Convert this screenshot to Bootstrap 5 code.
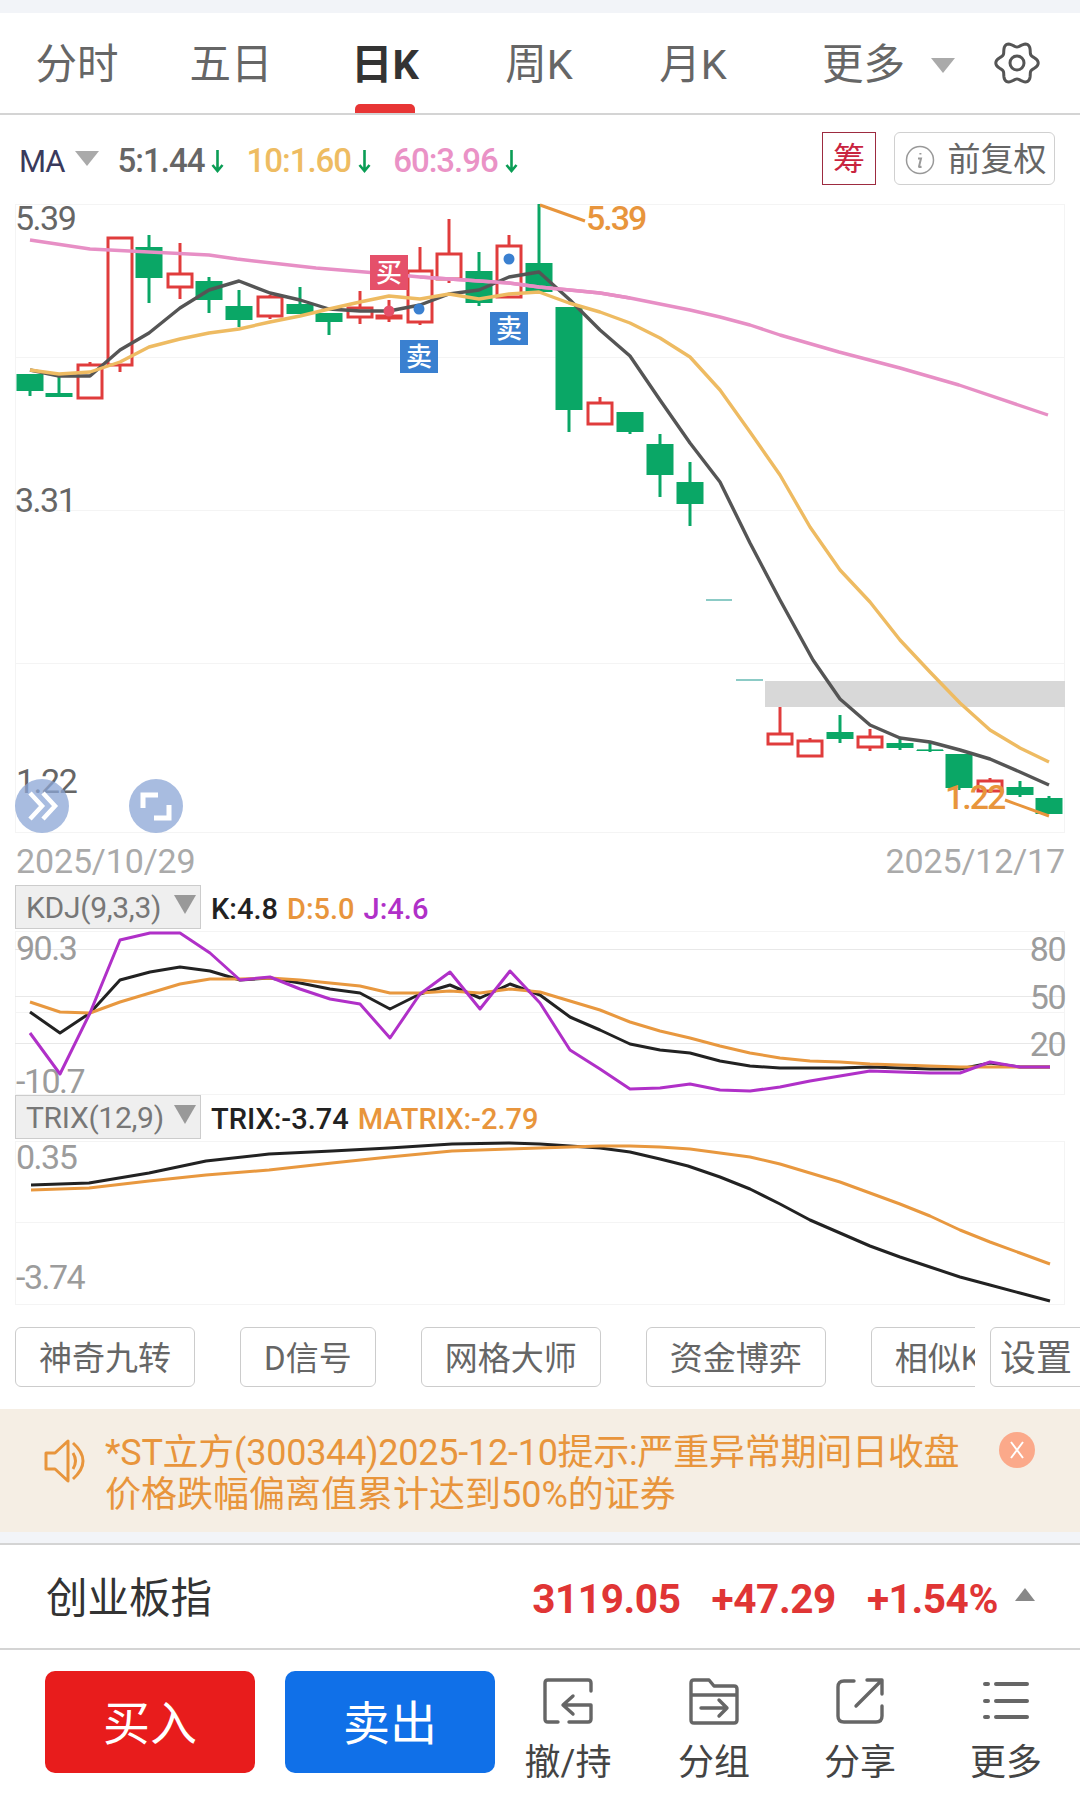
<!DOCTYPE html>
<html lang="zh-CN">
<head>
    <meta charset="UTF-8">
    <meta name="viewport" content="width=device-width, initial-scale=1.0">
    <title>创业板指 日K</title>
    <link rel="stylesheet" href="https://cdn.jsdelivr.net/npm/bootstrap@5.3.0/dist/css/bootstrap.min.css">
    <style>
        html, body { background: #fff; }
        body { width: 1080px; height: 1794px; overflow: hidden; font-family: Roboto, "Noto Sans CJK SC", sans-serif; color: #333; }
        svg { display: block; overflow: visible; }

        .top-strip { height: 13px; background: #f2f4f8; }

        .tab-bar { height: 102px; border-bottom: 2px solid #d4d4d4; }
        .tab-item { width: 154px; height: 100px; font-size: 41.5px; line-height: 104px; color: #666; text-align: center; position: relative; }
        .tab-item.active { color: #333; font-weight: 700; }
        .tab-item.active::after { content: ""; position: absolute; left: 47px; bottom: 0; width: 60px; height: 9px; border-radius: 5px 5px 0 0; background: #e83535; }
        .tab-more { width: 133px; margin-left: 52px; padding-top: 4px; }
        .tri-down { width: 0; height: 0; border-left: 12px solid transparent; border-right: 12px solid transparent; border-top: 15px solid #aaa; }
        .tab-gear { margin-left: 40px; }

        .ma-row { height: 75px; padding: 17px 25px 0 19px; }
        .ma-name { font-size: 31px; color: #3a3a5c; margin-right: 10px; letter-spacing: -1px; padding-top: 7px; }
        .ma-item { font-size: 33px; font-weight: 500; letter-spacing: -1px; margin-right: 22px; padding-top: 4px; }
        .ma-item svg { margin-left: 7px; }
        .c-ma5 { color: #666; }
        .c-ma10 { color: #eebc62; }
        .c-ma60 { color: #ea92c6; }
        .ma-tri { margin-right: 19px; }
        .chip-chou { width: 54px; height: 53px; border: 1px solid #9d2b40; color: #c9243f; font-size: 32px; }
        .chip-fq { width: 161px; height: 53px; margin-left: 18px; padding-top: 2px; padding-left: 2px; border: 1px solid #d0d0d0; border-radius: 6px; color: #666; font-size: 33px; gap: 13px; }

        .ax { font-size: 34px; letter-spacing: -1.5px; fill: #666; }
        .ax-light { fill: #9c9c9c; }
        .ax-hi { fill: #e8953c; font-weight: 500; letter-spacing: -2px; }
        .sig { font-size: 26px; fill: #fff; font-weight: 500; text-anchor: middle; }

        .date-row { height: 51px; padding: 12px 15px 0 16px; color: #aaa; font-size: 34px; line-height: 30px; letter-spacing: -.15px; }

        .ind-row { height: 45px; }
        .ind-box { width: 186px; height: 44px; margin-left: 15px; padding: 0 4px 0 10px; background: #efefef; border: 1px solid #ccc; color: #777; font-size: 30px; letter-spacing: -.3px; }
        .ind-tri { border-left-width: 11px; border-right-width: 11px; border-top: 19px solid #999; margin-top: -6px; }
        .ind-vals { margin-left: 10px; font-size: 29px; font-weight: 500; gap: 9px; }
        .c-k { color: #222; }
        .c-d { color: #e8953c; }
        .c-j { color: #b030c8; }

        .tool-row { height: 104px; padding-top: 22px; position: relative; }
        .tool-scroll { width: 975px; overflow: hidden; padding-left: 15px; gap: 45px; }
        .tool-btn { flex: none; height: 60px; padding: 0 23px; border: 1px solid #ccc; border-radius: 6px; background: #fff; color: #666; font-size: 33px; line-height: 62px; }
        .tool-set { position: absolute; left: 990px; top: 22px; width: 100px; height: 60px; padding-left: 9px; border: 1px solid #ccc; border-radius: 6px; color: #666; font-size: 36px; line-height: 62px; }

        .notice { height: 123px; background: #f5eee4; padding: 23px 0 0 44px; color: #e8953c; font-size: 36px; line-height: 42px; }
        .notice-first { letter-spacing: -.25px; white-space: nowrap; }
        .notice-text { width: 862px; margin-left: 17px; flex: none; }
        .notice-close { width: 36px; height: 36px; margin-left: 32px; border-radius: 50%; background: #fba98a; flex: none; }
        .gap-strip { height: 11px; background: #f2f4f8; border-bottom: 2px solid #d4d4d4; box-sizing: content-box; }

        .quote-row { height: 105px; padding: 6px 45px 0 46px; border-bottom: 2px solid #d4d4d4; }
        .quote-name { font-size: 41.5px; color: #333; }
        .quote-vals { font-size: 40.5px; font-weight: 700; color: #e03535; letter-spacing: -.4px; gap: 31px; }
        .tri-up { width: 0; height: 0; margin: -10px 0 0 -14px; border-left: 10px solid transparent; border-right: 10px solid transparent; border-bottom: 13px solid #888; }

        .act-bar { height: 144px; padding: 21px 0 0 45px; }
        .act-trade { flex: none; width: 210px; height: 102px; margin-right: 30px; padding-top: 4px; border: 0; border-radius: 10px; color: #fff; font-size: 47px; line-height: 1; }
        .act-buy { background: #e81c1c; }
        .act-sell { background: #1070e8; }
        .act-item { flex: none; width: 146px; color: #444; font-size: 36px; line-height: 40px; text-align: center; }
        .act-item svg { margin: 7px auto 19px; }
        .act-first { margin-left: -30px; }
    </style>
</head>
<body>
    <div class="top-strip"></div>

    <!-- period tabs -->
    <div class="tab-bar d-flex align-items-center">
        <div class="tab-item">分时</div>
        <div class="tab-item">五日</div>
        <div class="tab-item active">日K</div>
        <div class="tab-item">周K</div>
        <div class="tab-item">月K</div>
        <div class="tab-item tab-more d-flex align-items-center justify-content-between">
            <span>更多</span><span class="tri-down"></span>
        </div>
        <div class="tab-gear">
            <svg width="44" height="44" viewBox="-22 -22 44 44" fill="none" stroke="#555" stroke-width="3"><path id="gearPath"/><circle r="7"/></svg>
        </div>
    </div>

    <!-- MA legend -->
    <div class="ma-row d-flex align-items-start">
        <div class="d-flex align-items-center" style="height:53px">
            <span class="ma-name">MA</span><span class="tri-down ma-tri"></span>
            <span class="ma-item c-ma5 d-flex align-items-center">5:1.44<svg width="13" height="24" viewBox="0 0 13 24" fill="none" stroke="#0a9d55" stroke-width="2.6"><path d="M6.5 1v21M1.5 16l5 6 5-6"/></svg></span>
            <span class="ma-item c-ma10 d-flex align-items-center">10:1.60<svg width="13" height="24" viewBox="0 0 13 24" fill="none" stroke="#0a9d55" stroke-width="2.6"><path d="M6.5 1v21M1.5 16l5 6 5-6"/></svg></span>
            <span class="ma-item c-ma60 d-flex align-items-center">60:3.96<svg width="13" height="24" viewBox="0 0 13 24" fill="none" stroke="#0a9d55" stroke-width="2.6"><path d="M6.5 1v21M1.5 16l5 6 5-6"/></svg></span>
        </div>
        <div class="ms-auto d-flex">
            <div class="chip-chou d-flex align-items-center justify-content-center">筹</div>
            <div class="chip-fq d-flex align-items-center justify-content-center">
                <svg width="30" height="30" viewBox="0 0 30 30" fill="none" stroke="#999" stroke-width="1.5"><circle cx="15" cy="15" r="13.5"/><path d="M13 13.5h3l-2 8q0 1.2 2.5 0M15.4 8v1.4" stroke-width="2"/></svg>
                <span>前复权</span>
            </div>
        </div>
    </div>

    <!-- main K line chart, svg coords are page coords -->
    <svg id="kChart" width="1080" height="644" viewBox="0 190 1080 644"></svg>

    <div class="date-row d-flex justify-content-between"><span>2025/10/29</span><span>2025/12/17</span></div>

    <div class="ind-row d-flex align-items-start">
        <div class="ind-box d-flex align-items-center justify-content-between"><span>KDJ(9,3,3)</span><span class="tri-down ind-tri"></span></div>
        <div class="ind-vals d-flex align-items-center" style="height:50px">
            <span class="c-k">K:4.8</span><span class="c-d">D:5.0</span><span class="c-j">J:4.6</span>
        </div>
    </div>
    <svg id="kdjChart" width="1080" height="165" viewBox="0 930 1080 165"></svg>

    <div class="ind-row d-flex align-items-start">
        <div class="ind-box d-flex align-items-center justify-content-between"><span>TRIX(12,9)</span><span class="tri-down ind-tri"></span></div>
        <div class="ind-vals d-flex align-items-center" style="height:50px">
            <span class="c-k">TRIX:-3.74</span><span class="c-d">MATRIX:-2.79</span>
        </div>
    </div>
    <svg id="trixChart" width="1080" height="165" viewBox="0 1140 1080 165"></svg>

    <!-- tool buttons -->
    <div class="tool-row">
        <div class="tool-scroll d-flex">
            <div class="tool-btn">神奇九转</div>
            <div class="tool-btn">D信号</div>
            <div class="tool-btn">网格大师</div>
            <div class="tool-btn">资金博弈</div>
            <div class="tool-btn">相似K线</div>
        </div>
        <div class="tool-set">设置</div>
    </div>

    <div class="notice d-flex align-items-start">
        <svg width="44" height="44" viewBox="0 0 44 44" fill="none" stroke="#e8953c" stroke-width="3" stroke-linejoin="round" style="margin-top:7px;flex:none"><path d="M2 14h9L24 2v40L11 30H2z"/><path d="M29 14q5 8 0 16M29 4q20 18 0 36"/></svg>
        <div class="notice-text">
            <div class="notice-first">*ST立方(300344)2025-12-10提示:严重异常期间日收盘</div>
            <div>价格跌幅偏离值累计达到50%的证券</div>
        </div>
        <div class="notice-close d-flex align-items-center justify-content-center"><svg width="18" height="22" viewBox="0 0 18 22" stroke="#fff" stroke-width="2"><path d="M3 3l12 16M15 3L3 19"/></svg></div>
    </div>
    <div class="gap-strip"></div>

    <div class="quote-row d-flex align-items-center justify-content-between">
        <div class="quote-name">创业板指</div>
        <div class="quote-vals d-flex align-items-center"><span>3119.05</span><span>+47.29</span><span>+1.54%</span><span class="tri-up"></span></div>
    </div>

    <!-- bottom actions -->
    <div class="act-bar d-flex align-items-start">
        <button class="act-trade act-buy">买入</button>
        <button class="act-trade act-sell">卖出</button>
        <div class="act-item act-first">
            <svg width="50" height="46" viewBox="0 0 50 46" fill="none" stroke="#666" stroke-width="3.4" stroke-linecap="round" stroke-linejoin="round"><path d="M15 44H5q-3 0-3-3V5q0-3 3-3h40q3 0 3 3v8M26 44h19q3 0 3-3V27H21M30 18l-10 9 10 9"/></svg>
            撤/持
        </div>
        <div class="act-item">
            <svg width="50" height="46" viewBox="0 0 50 46" fill="none" stroke="#666" stroke-width="3.4" stroke-linecap="round" stroke-linejoin="round"><path d="M2 17V5q0-3 3-3h15l5 6h20q3 0 3 3v31q0 3-3 3H5q-3 0-3-3zh46M12 30h26M30 22l8 8-8 8"/></svg>
            分组
        </div>
        <div class="act-item">
            <svg width="48" height="46" viewBox="0 0 48 46" fill="none" stroke="#666" stroke-width="3.4" stroke-linecap="round" stroke-linejoin="round"><path d="M18 3H8Q2 3 2 9v29q0 6 6 6h32q6 0 6-6V28M20 28L45 3M31 2h15v14"/></svg>
            分享
        </div>
        <div class="act-item">
            <svg width="46" height="46" viewBox="0 0 46 46" fill="none" stroke="#666" stroke-width="4" stroke-linecap="round"><path d="M13 6h31M13 23h31M13 39h31M2 6h3M2 23h3M2 39h3"/></svg>
            更多
        </div>
    </div>

    <script>
        const NS = "http://www.w3.org/2000/svg";
        const RED = "#e03c3c", GREEN = "#0aa766";

        function el(svg, name, attrs, text) {
            const node = document.createElementNS(NS, name);
            for (const k in attrs) node.setAttribute(k, attrs[k]);
            if (text) node.textContent = text;
            svg.appendChild(node);
            return node;
        }
        function line(svg, x1, y1, x2, y2, color, w) {
            el(svg, "line", { x1, y1, x2, y2, stroke: color, "stroke-width": w });
        }
        function poly(svg, pts, color, w) {
            el(svg, "polyline", { points: pts.join(" "), fill: "none", stroke: color, "stroke-width": w, "stroke-linejoin": "round" });
        }
        function label(svg, x, y, text, cls, anchor) {
            el(svg, "text", { x, y, class: cls, "text-anchor": anchor || "start" }, text);
        }
        // frame with horizontal lines
        function frame(svg, top, bottom, rows, color) {
            el(svg, "rect", { x: 15.5, y: top + .5, width: 1049, height: bottom - top, fill: "none", stroke: "#f4f4f4" });
            rows.forEach(y => line(svg, 15, y + .5, 1065, y + .5, color || "#f4f4f4", 1));
        }

        // gear outline
        let gear = "";
        for (let a = 0; a <= 120; a++) {
            const t = a / 120 * Math.PI * 2, r = 18.6 + 2.6 * Math.cos(6 * t);
            gear += (a ? "L" : "M") + (r * Math.cos(t)).toFixed(2) + " " + (r * Math.sin(t)).toFixed(2);
        }
        document.getElementById("gearPath").setAttribute("d", gear + "Z");

        // [x, color, bodyTop, bodyBottom, wickTop, wickBottom]
        const candles = [
            [30, "g", 374, 391, 374, 396], [59, "g", 393, 397, 377, 397], [90, "r", 364, 399, 362, 399],
            [120, "r", 237, 366, 237, 372], [149, "g", 247, 278, 235, 303], [180, "r", 273, 288, 243, 299],
            [209, "g", 281, 300, 277, 313], [239, "g", 306, 320, 290, 327], [270, "r", 296, 317, 295, 319],
            [300, "g", 304, 314, 287, 314], [329, "g", 313, 322, 313, 335], [360, "r", 307, 318, 291, 324],
            [389, "r", 315, 317, 300, 322], [420, "r", 270, 323, 247, 325], [449, "r", 253, 280, 219, 283],
            [479, "g", 271, 303, 252, 306], [509, "r", 245, 298, 235, 298], [539, "g", 263, 292, 204, 292],
            [569, "g", 307, 410, 307, 432], [600, "r", 402, 425, 397, 425], [630, "g", 412, 432, 412, 434],
            [660, "g", 444, 475, 434, 497], [690, "g", 482, 504, 462, 526],
            [780, "r", 733, 745, 707, 745], [810, "r", 740, 757, 738, 757], [840, "g", 732, 739, 715, 743],
            [870, "r", 736, 748, 729, 751], [900, "g", 743, 748, 737, 750], [930, "g", 750, 751, 742, 752],
            [959, "g", 754, 788, 754, 790], [990, "r", 780, 792, 778, 793], [1020, "g", 787, 795, 781, 797],
            [1049, "g", 798, 814, 796, 814]
        ];
        const ma5 = [30,370, 59,376, 90,376, 120,350, 149,333, 180,308, 209,290, 239,281, 270,293, 300,300, 329,309, 360,311, 389,311, 420,305, 449,294, 479,290, 509,277, 539,272, 570,300, 600,330, 630,356, 660,400, 690,443, 720,482, 750,543, 780,600, 813,660, 840,699, 870,725, 900,738, 930,742, 960,750, 990,759, 1020,772, 1049,785];
        const ma10 = [30,370, 59,374, 90,372, 120,362, 149,347, 180,339, 209,333, 239,329, 270,322, 300,316, 329,309, 360,302, 389,296, 420,299, 449,294, 479,299, 509,294, 539,292, 569,303, 600,312, 630,323, 660,338, 690,357, 720,390, 750,432, 780,475, 810,527, 840,570, 870,602, 900,640, 930,672, 960,703, 990,730, 1020,748, 1049,762];
        const ma60 = [30,240, 90,249, 149,252, 209,255, 237,259, 316,268, 389,274, 420,277, 509,283, 539,287, 600,293, 630,298, 690,310, 720,317, 750,325, 780,335, 839,352, 900,368, 959,385, 1048,415];

        const k = document.getElementById("kChart");
        frame(k, 204, 832, [357, 510, 663]);
        el(k, "rect", { x: 765, y: 681, width: 300, height: 26, fill: "#d8d8d8" });
        candles.forEach(([x, c, t, b, wt, wb]) => {
            const col = c === "r" ? RED : GREEN;
            if (c === "r") {
                line(k, x, wt, x, t, col, 3);
                line(k, x, b, x, wb, col, 3);
                el(k, "rect", { x: x - 12, y: t + 1, width: 24, height: b - t - 2 > 2 ? b - t - 2 : 2, fill: "#fff", stroke: col, "stroke-width": 3 });
            } else {
                line(k, x, wt, x, wb, col, 3);
                el(k, "rect", { x: x - 13.5, y: t, width: 27, height: b - t, fill: col });
            }
        });
        line(k, 706, 600, 732, 600, "#3fa8a0", 1.2);
        line(k, 736, 680, 763, 680, "#3fa8a0", 1.2);
        line(k, 917, 750, 943, 750, GREEN, 1.2);
        poly(k, ma60, "#e78fc5", 3.4);
        poly(k, ma5, "#555", 3.4);
        poly(k, ma10, "#eebb62", 3.4);
        // redraw pink over the crossing part, as it lies on top there
        poly(k, ma60.slice(14, 24), "#e78fc5", 3.4);

        el(k, "circle", { cx: 389, cy: 311, r: 5.5, fill: "#e5506a" });
        el(k, "circle", { cx: 419, cy: 309, r: 5.5, fill: "#3a80d0" });
        el(k, "circle", { cx: 509, cy: 259, r: 5.5, fill: "#3a80d0" });
        [[370, 255, 38, 35, "#e5506a", "买"], [400, 340, 38, 33, "#3a80d0", "卖"], [490, 312, 38, 33, "#3a80d0", "卖"]].forEach(([x, y, w, h, col, t]) => {
            el(k, "rect", { x, y, width: w, height: h, fill: col });
            label(k, x + w / 2, y + h / 2 + 9.5, t, "sig", "middle");
        });

        line(k, 540, 205, 585, 221, "#e8953c", 3);
        line(k, 1005, 800, 1049, 816, "#e8953c", 3);
        label(k, 15, 230, "5.39", "ax");
        label(k, 15, 512, "3.31", "ax");
        label(k, 16, 793, "1.22", "ax");
        label(k, 586, 230, "5.39", "ax ax-hi");
        label(k, 945, 809, "1.22", "ax ax-hi");

        el(k, "circle", { cx: 42, cy: 806, r: 27, fill: "#8ba6d6", "fill-opacity": .75 });
        el(k, "circle", { cx: 156, cy: 806, r: 27, fill: "#8ba6d6", "fill-opacity": .75 });
        el(k, "path", { d: "M30 793l12 13-12 13M43 793l12 13-12 13", fill: "none", stroke: "#fff", "stroke-width": 4.5 });
        el(k, "path", { d: "M158 795h-15v13M154 818h15v-13", fill: "none", stroke: "#fff", "stroke-width": 5 });

        const kLine = [30,1012, 60,1033, 90,1013, 120,980, 150,972, 180,967, 210,971, 240,980, 270,978, 300,983, 330,989, 360,993, 390,1009, 420,994, 450,985, 480,998, 510,984, 540,995, 570,1017, 600,1030, 630,1044, 660,1050, 690,1053, 720,1061, 750,1066, 780,1068, 810,1068, 840,1068, 870,1067, 900,1068, 930,1069, 960,1069, 990,1063, 1020,1067, 1050,1067];
        const dLine = [30,1002, 60,1012, 90,1013, 120,1002, 150,993, 180,984, 210,979, 240,979, 270,978, 300,980, 330,983, 360,986, 390,993, 420,993, 450,991, 480,993, 510,989, 540,992, 570,1001, 600,1010, 630,1022, 660,1031, 690,1038, 720,1046, 750,1053, 780,1058, 810,1061, 840,1062, 870,1064, 900,1065, 930,1066, 960,1067, 990,1067, 1020,1067, 1050,1067];
        const jLine = [30,1033, 60,1074, 90,1013, 120,940, 150,933, 180,933, 210,953, 240,980, 270,977, 300,989, 330,999, 360,1004, 390,1038, 420,994, 450,972, 480,1009, 510,971, 540,1003, 570,1050, 600,1069, 630,1089, 660,1088, 690,1084, 720,1090, 750,1091, 780,1087, 810,1081, 840,1076, 870,1071, 900,1072, 930,1073, 960,1073, 990,1062, 1020,1067, 1050,1067];

        const kd = document.getElementById("kdjChart");
        frame(kd, 931, 1094, [1012]);
        [949, 996, 1043].forEach(y => line(kd, 15, y + .5, 1065, y + .5, "#e8e8e8", 1));
        label(kd, 16, 960, "90.3", "ax ax-light");
        label(kd, 16, 1093, "-10.7", "ax ax-light");
        label(kd, 1065, 961, "80", "ax ax-light", "end");
        label(kd, 1065, 1009, "50", "ax ax-light", "end");
        label(kd, 1065, 1056, "20", "ax ax-light", "end");
        poly(kd, kLine, "#222", 3);
        poly(kd, dLine, "#e8983f", 3);
        poly(kd, jLine, "#b030c8", 3);

        const trixLine = [31,1185, 89,1183, 149,1173, 206,1161, 269,1154, 332,1151, 389,1148, 452,1144, 509,1143, 540,1144, 600,1148, 630,1152, 660,1159, 688,1166, 720,1177, 750,1189, 780,1204, 810,1220, 840,1233, 870,1246, 900,1257, 930,1267, 960,1277, 990,1285, 1020,1293, 1050,1301];
        const matrixLine = [31,1190, 89,1188, 149,1181, 206,1175, 269,1170, 332,1163, 389,1157, 452,1151, 509,1149, 570,1147, 600,1146, 630,1146, 660,1147, 690,1149, 720,1153, 750,1157, 780,1164, 810,1173, 840,1182, 870,1193, 900,1204, 930,1216, 960,1230, 990,1242, 1020,1253, 1050,1264];

        const tr = document.getElementById("trixChart");
        frame(tr, 1141, 1304, [1222]);
        label(tr, 16, 1169, "0.35", "ax ax-light");
        label(tr, 16, 1289, "-3.74", "ax ax-light");
        poly(tr, trixLine, "#222", 3);
        poly(tr, matrixLine, "#e8983f", 3);
    </script>
    <script src="https://cdn.jsdelivr.net/npm/bootstrap@5.3.0/dist/js/bootstrap.bundle.min.js"></script>
</body>
</html>
